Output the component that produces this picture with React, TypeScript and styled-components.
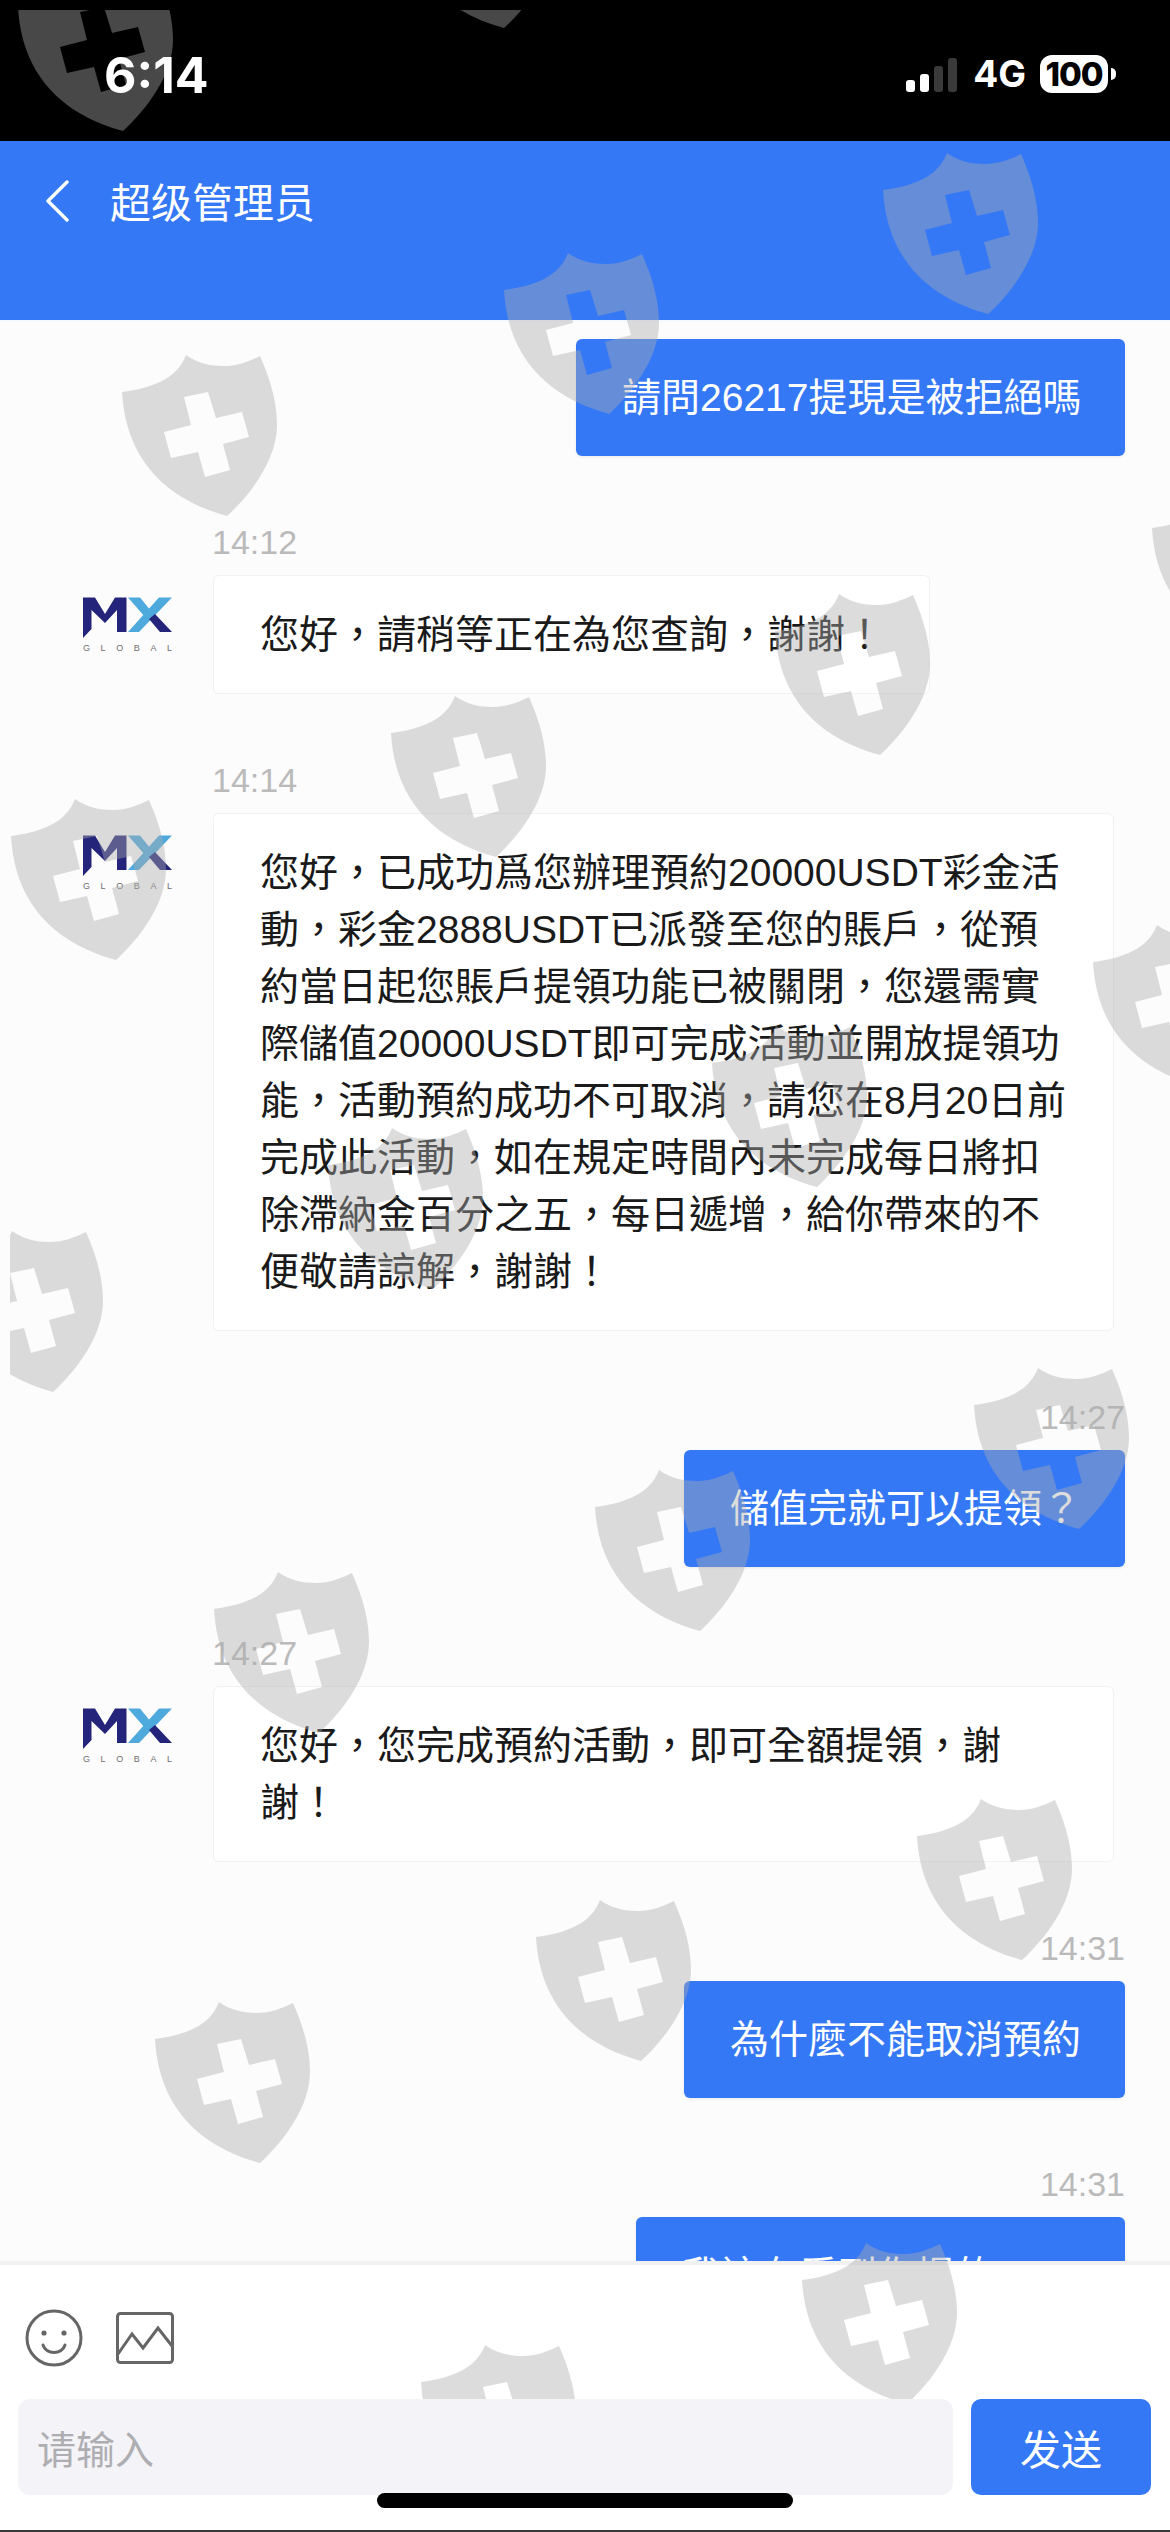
import React from "react";
import styled, { createGlobalStyle } from "styled-components";

const GlobalStyle = createGlobalStyle`
  html, body {
    margin: 0;
    padding: 0;
    background: #fff;
  }
  * {
    box-sizing: border-box;
  }
`;

const BLUE = "#3478f6";
const SANS_TC = `"Liberation Sans", "Noto Sans CJK TC", sans-serif`;
const SANS_SC = `"Liberation Sans", "Noto Sans CJK SC", sans-serif`;

const Page = styled.div`
  position: relative;
  width: 1170px;
  height: 2532px;
  display: flex;
  flex-direction: column;
  overflow: hidden;
  background: #fff;
  font-family: ${SANS_TC};
`;

const StatusBar = styled.div`
  height: 141px;
  flex: none;
  background: #000;
  color: #fff;
  display: flex;
  justify-content: space-between;
  align-items: flex-start;
  padding: 47px 54px 0 104px;
  font-family: Inter, "Liberation Sans", sans-serif;
  font-weight: 700;
`;

const Clock = styled.div`
  position: relative;
  z-index: 3;
  font-size: 50px;
  line-height: 56px;
`;

const StatusIcons = styled.div`
  position: relative;
  z-index: 3;
  display: flex;
  align-items: center;
  height: 38px;
  margin-top: 8px;
`;

const Signal = styled.div`
  display: flex;
  align-items: flex-end;
  gap: 5px;
  height: 34px;
  margin-top: 2px;
  margin-right: 16px;
`;

const SignalBar = styled.span<{ $h: number; $on?: boolean }>`
  width: 9px;
  height: ${(p) => p.$h}px;
  border-radius: 3px;
  background: ${(p) => (p.$on ? "#fff" : "#3a3a3a")};
`;

const Network = styled.span`
  font-size: 37px;
  line-height: 38px;
  margin-right: 14px;
`;

const Battery = styled.span`
  width: 68px;
  height: 38px;
  border-radius: 12px;
  background: #fff;
  color: #000;
  font-size: 33px;
  line-height: 38px;
  font-weight: 800;
  text-align: center;
  letter-spacing: -1px;
`;

const BatteryNub = styled.span`
  width: 5px;
  height: 12px;
  margin-left: 3px;
  border-radius: 0 6px 6px 0;
  background: #fff;
`;

const Header = styled.header`
  height: 179px;
  flex: none;
  background: ${BLUE};
  color: #fff;
  display: flex;
  align-items: flex-start;
  gap: 41px;
  padding: 39px 0 0 46px;
  font-family: ${SANS_SC};
`;

const BackIcon = styled.svg`
  width: 23px;
  height: 42px;
  flex: none;
`;

const Title = styled.div`
  font-size: 41px;
  line-height: 48px;
`;

const Thread = styled.main`
  flex: 1;
  min-height: 0;
  overflow: hidden;
  background: #fcfcfc;
  border-top: 2px solid #f4f8ff;
  padding: 17px 45px 0 83px;
  display: flex;
  flex-direction: column;
  gap: 69px;
`;

const Message = styled.section`
  display: flex;
  flex-direction: column;
  flex: none;
`;

const Time = styled.div<{ $mine?: boolean }>`
  font-size: 34px;
  line-height: 34px;
  color: #bababa;
  margin-bottom: 16px;
  text-align: ${(p) => (p.$mine ? "right" : "left")};
  padding-left: ${(p) => (p.$mine ? 0 : 129)}px;
`;

const Row = styled.div`
  display: flex;
  align-items: flex-start;
  gap: 41px;
`;

const Avatar = styled.div`
  width: 89px;
  flex: none;
  margin-top: 22px;
  display: flex;
  flex-direction: column;
  gap: 5px;
`;

const LogoMark = styled.svg`
  display: block;
  width: 89px;
  height: 42px;
`;

const LogoWord = styled.span`
  display: flex;
  justify-content: space-between;
  font-size: 9px;
  line-height: 9px;
  color: #6f6f6f;
`;

const Bubble = styled.div<{ $width: number }>`
  width: ${(p) => p.$width}px;
  font-size: 39px;
  line-height: 57px;
  word-break: break-all;
  border-radius: 6px;
`;

const InBubble = styled(Bubble)`
  background: #fff;
  color: #1a1a1a;
  border: 1px solid #f1f1f1;
  padding: 30px 42px 30px 46px;
`;

const OutBubble = styled(Bubble)`
  align-self: flex-end;
  flex: none;
  background: ${BLUE};
  color: #fff;
  padding: 30px 20px 30px 46px;
  box-shadow: 0 1px 3px rgba(0, 0, 0, 0.08);
`;

const Composer = styled.footer`
  height: 271px;
  flex: none;
  background: #fff;
  border-top: 4px solid #f1f1f1;
  padding: 0 19px 0 18px;
`;

const Tools = styled.div`
  height: 134px;
  display: flex;
  align-items: center;
  gap: 33px;
  padding: 12px 0 0 7px;
`;

const SmileIcon = styled.svg`
  width: 58px;
  height: 58px;
`;

const PictureIcon = styled.svg`
  width: 58px;
  height: 52px;
`;

const InputRow = styled.div`
  display: flex;
  gap: 18px;
  height: 96px;
  font-family: ${SANS_SC};
`;

const Field = styled.div`
  position: relative;
  z-index: 3;
  flex: 1;
  background: #f3f3f8;
  border-radius: 12px;
  padding: 4px 0 0 19px;
  font-size: 39px;
  line-height: 96px;
  color: #aeaeb2;
`;

const SendButton = styled.button`
  position: relative;
  z-index: 3;
  width: 180px;
  border: 0;
  padding: 0;
  border-radius: 10px;
  background: ${BLUE};
  color: #fff;
  font: inherit;
  font-size: 41px;
`;

const HomeIndicator = styled.div`
  position: absolute;
  z-index: 4;
  left: 377px;
  top: 2493px;
  width: 416px;
  height: 15px;
  border-radius: 8px;
  background: #000;
`;

const BottomEdge = styled.div`
  position: absolute;
  z-index: 4;
  left: 0;
  right: 0;
  bottom: 0;
  height: 2px;
  background: #3a3a3a;
`;

/* the watermark tiles lie over everything and are cut 10px from the top left */
const Watermark = styled.div`
  position: absolute;
  z-index: 2;
  inset: 10px 0 0 10px;
  overflow: hidden;
  pointer-events: none;
`;

const Shield = styled.svg<{ $x: number; $y: number }>`
  position: absolute;
  left: ${(p) => p.$x - 10}px;
  top: ${(p) => p.$y - 10}px;
  width: 155px;
  height: 162px;
`;

const shieldTiles = [
  [18, -30], [399, -133],
  [883, 153], [504, 253], [122, 355],
  [1152, 491], [775, 594], [391, 696], [11, 799],
  [1093, 925], [712, 1026], [328, 1128], [-52, 1231],
  [974, 1368], [595, 1470], [214, 1572],
  [917, 1799], [536, 1900], [155, 2002],
  [802, 2243], [421, 2345],
];

const SHIELD_PATH =
  "M0 37C30 33 55 24 64 0C75 8 88 11 102 11C115 11 128 6 138 1C150 28 155 50 155 70C155 105 128 140 105 161C50 146 4 110 0 37Z" +
  "M62 42L86 37L94 63L120 57L127 82L101 89L108 115L83 122L76 97L49 103L42 77L69 70Z";

const Logo = () => (
  <Avatar>
    <LogoMark viewBox="0 0 89 42">
      <path fill="#25247b" d="M0 .5H12L22 17L32 .5H43.5V35H34V13L22 26L8.5 13V32L0 41Z" />
      <path fill="#4ea9dd" d="M76 .5H89L56 35H45ZM45 .5H57L68 14L62 20Z" />
      <path fill="#25247b" d="M66 22L72 17L89 35H77Z" />
    </LogoMark>
    <LogoWord>
      <span>G</span>
      <span>L</span>
      <span>O</span>
      <span>B</span>
      <span>A</span>
      <span>L</span>
    </LogoWord>
  </Avatar>
);

const Incoming = ({ time, width, text }: { time: string; width: number; text: string }) => (
  <Message>
    <Time>{time}</Time>
    <Row>
      <Logo />
      <InBubble $width={width}>{text}</InBubble>
    </Row>
  </Message>
);

const Outgoing = ({ time, width, text }: { time?: string; width: number; text: string }) => (
  <Message>
    {time && <Time $mine>{time}</Time>}
    <OutBubble $width={width}>{text}</OutBubble>
  </Message>
);

export default function App() {
  return (
    <Page>
      <GlobalStyle />
      <StatusBar>
        <Clock>6:14</Clock>
        <StatusIcons>
          <Signal>
            <SignalBar $h={12} $on />
            <SignalBar $h={18} $on />
            <SignalBar $h={26} />
            <SignalBar $h={34} />
          </Signal>
          <Network>4G</Network>
          <Battery>100</Battery>
          <BatteryNub />
        </StatusIcons>
      </StatusBar>

      <Header>
        <BackIcon viewBox="0 0 23 42" fill="none" stroke="#fff" strokeWidth="3.4" strokeLinecap="round" strokeLinejoin="round">
          <polyline points="21,2 2,21 21,40" />
        </BackIcon>
        <Title>超级管理员</Title>
      </Header>

      <Thread>
        <Outgoing width={549} text="請問26217提現是被拒絕嗎" />
        <Incoming time="14:12" width={717} text="您好，請稍等正在為您查詢，謝謝！" />
        <Incoming
          time="14:14"
          width={901}
          text="您好，已成功爲您辦理預約20000USDT彩金活動，彩金2888USDT已派發至您的賬戶，從預約當日起您賬戶提領功能已被關閉，您還需實際儲值20000USDT即可完成活動並開放提領功能，活動預約成功不可取消，請您在8月20日前完成此活動，如在規定時間內未完成每日將扣除滯納金百分之五，每日遞增，給你帶來的不便敬請諒解，謝謝！"
        />
        <Outgoing time="14:27" width={441} text="儲值完就可以提領？" />
        <Incoming time="14:27" width={901} text="您好，您完成預約活動，即可全額提領，謝謝！" />
        <Outgoing time="14:31" width={441} text="為什麼不能取消預約" />
        <Outgoing time="14:31" width={489} text="我這有看到你提的" />
      </Thread>

      <Composer>
        <Tools>
          <SmileIcon viewBox="0 0 58 58" fill="none" stroke="#666" strokeWidth="3">
            <circle cx="29" cy="29" r="27" />
            <circle cx="19" cy="24" r="2.6" fill="#666" stroke="none" />
            <circle cx="39" cy="24" r="2.6" fill="#666" stroke="none" />
            <path d="M18 36C21 46 37 46 40 36" strokeLinecap="round" />
          </SmileIcon>
          <PictureIcon viewBox="0 0 58 52" fill="none" stroke="#666" strokeWidth="3">
            <rect x="1.5" y="1.5" width="55" height="49" rx="3" />
            <polyline points="2,42 16,22 27,36 42,16 56,34" strokeLinejoin="miter" />
          </PictureIcon>
        </Tools>
        <InputRow>
          <Field>请输入</Field>
          <SendButton>发送</SendButton>
        </InputRow>
      </Composer>

      <Watermark>
        {shieldTiles.map(([x, y]) => (
          <Shield key={`${x}-${y}`} $x={x} $y={y} viewBox="0 0 155 162">
            <path d={SHIELD_PATH} fill="#acacac" fillOpacity="0.42" fillRule="evenodd" />
          </Shield>
        ))}
      </Watermark>

      <HomeIndicator />
      <BottomEdge />
    </Page>
  );
}
